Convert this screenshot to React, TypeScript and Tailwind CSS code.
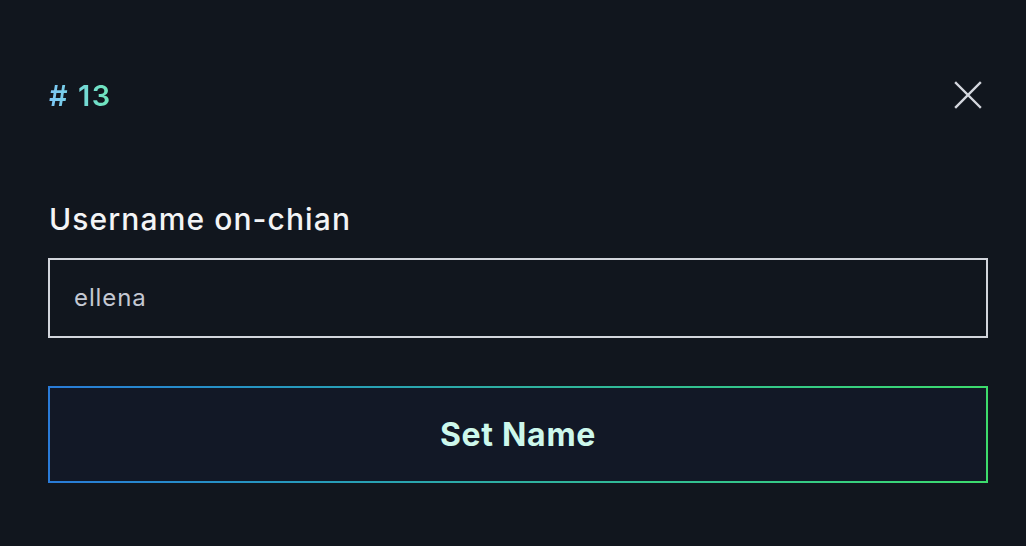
import React from "react";

export default function App() {
  return (
    <div
      className="w-[1026px] h-[546px] bg-[#11161e] flex flex-col pl-[48px] pr-[38px]"
      style={{ fontFamily: "Inter, 'Noto Sans', sans-serif" }}
    >
      <div className="flex items-center justify-between h-[50px] mt-[70px]">
        <span className="text-[29px] font-semibold leading-none tracking-[1.5px] bg-gradient-to-r from-[#7cc4f8] to-[#6ee7b7] bg-clip-text text-transparent pl-[1px]">
          # 13
        </span>
        <svg width="28" height="28" viewBox="0 0 28 28" className="mr-[6px]">
          <path d="M2 2 L26 26 M26 2 L2 26" stroke="#d4d7de" strokeWidth="2.4" strokeLinecap="square" />
        </svg>
      </div>
      <label className="mt-[84px] text-[30px] font-medium leading-none tracking-[1.1px] text-[#f3f4f6] pl-[1px]">Username on-chian</label>
      <div className="mt-[24px] h-[80px] border-2 border-[#d2d5dc] flex items-center px-[24px]">
        <span className="text-[24px] tracking-[0.9px] text-[#c4c8d2]">ellena</span>
      </div>
      <div className="mt-[48px] h-[97px] p-[2px] bg-gradient-to-r from-[#2a7bd8] via-[#2fb0a0] to-[#3ddc6c]">
        <div className="w-full h-full bg-[#121826] flex items-center justify-center">
          <span className="text-[32px] font-bold tracking-[0.7px] text-[#cdf8ec]">Set Name</span>
        </div>
      </div>
    </div>
  );
}
